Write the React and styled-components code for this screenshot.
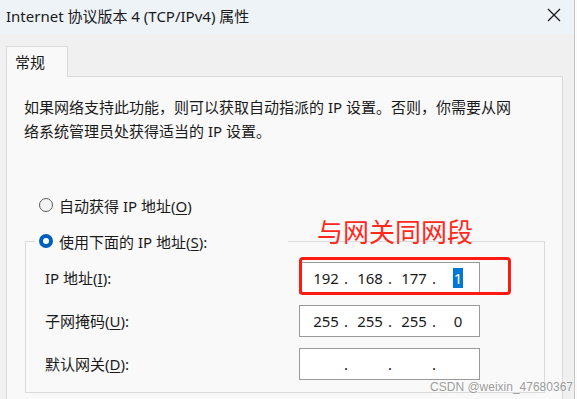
import styled, { createGlobalStyle } from "styled-components";

const GlobalStyle = createGlobalStyle`
    html, body {
        margin: 0;
        padding: 0;
        background: #fafafa;
    }
    body {
        font-family: "Noto Sans", "Noto Sans CJK SC", sans-serif;
        color: #1a1a1a;
    }
`;

const ipRows = [
    { label: "IP 地址", key: "I", parts: ["192", "168", "177", "1"], marked: true },
    { label: "子网掩码", key: "U", parts: ["255", "255", "255", "0"] },
    { label: "默认网关", key: "D", parts: ["", "", "", ""] },
];

const CloseIcon = () => (
    <svg width="14" height="14" viewBox="0 0 14 14">
        <path d="M1 1 L13 13 M13 1 L1 13" stroke="#1a1a1a" strokeWidth="1.3" fill="none" />
    </svg>
);

const IpField = ({ parts, marked }) => (
    <FieldBox>
        {parts.map((p, i) => (
            <Segment key={i}>
                <Number>{i === 3 && marked ? <Selected>{p}</Selected> : p}</Number>
                {i < 3 && <Dot>.</Dot>}
            </Segment>
        ))}
    </FieldBox>
);

const App = () => {
    return (
        <Screen>
            <GlobalStyle />
            <Window>
                <TitleBar>
                    <Title>Internet 协议版本 4 (TCP/IPv4) 属性</Title>
                    <CloseButton>
                        <CloseIcon />
                    </CloseButton>
                </TitleBar>

                <Body>
                    <TabStrip>
                        <Tab>常规</Tab>
                    </TabStrip>

                    <Panel>
                        <Description>
                            如果网络支持此功能，则可以获取自动指派的 IP 设置。否则，你需要从网
                            <br />
                            络系统管理员处获得适当的 IP 设置。
                        </Description>

                        <Option>
                            <Radio />
                            <span>自动获得 IP 地址(<u>O</u>)</span>
                        </Option>

                        <Group>
                            <Legend>
                                <Option as="div">
                                    <Radio checked />
                                    <span>使用下面的 IP 地址(<u>S</u>):</span>
                                </Option>
                            </Legend>
                            <Grid>
                                {ipRows.map(row => (
                                    <Row key={row.key}>
                                        <Label>
                                            {row.label}(<u>{row.key}</u>):
                                        </Label>
                                        <FieldWrap>
                                            <IpField parts={row.parts} marked={row.marked} />
                                            {row.marked && <Marker />}
                                        </FieldWrap>
                                    </Row>
                                ))}
                            </Grid>
                        </Group>
                    </Panel>
                </Body>

                <Note>与网关同网段</Note>
                <Watermark>CSDN @weixin_47680367</Watermark>
            </Window>
        </Screen>
    );
};

const Screen = styled.div`
    width: 577px;
    height: 399px;
    overflow: hidden;
    display: flex;
    background: #fafafa;
`;

const Window = styled.div`
    position: relative;
    width: 574px;
    height: 399px;
    flex-shrink: 0;
    background: #f0f0f0;
    border-right: 1px solid #c6c6c6;
    display: flex;
    flex-direction: column;
`;

const TitleBar = styled.div`
    height: 34px;
    flex-shrink: 0;
    display: flex;
    align-items: center;
    justify-content: space-between;
    padding: 0 13px 0 6px;
    background: #eef3f8;
`;

const Title = styled.div`
    font-size: 15px;
    line-height: 20px;
    color: #1a1a1a;
    padding-bottom: 3px;
`;

const CloseButton = styled.div`
    display: flex;
    align-items: center;
    padding-bottom: 4px;
`;

const Body = styled.div`
    padding: 12px 11px 0 6px;
    display: flex;
    flex-direction: column;
`;

const TabStrip = styled.div`
    display: flex;
    position: relative;
    z-index: 1;
    margin-bottom: -1px;
`;

const Tab = styled.div`
    width: 62px;
    height: 31px;
    box-sizing: border-box;
    padding: 2px 0 0 8px;
    border: 1px solid #dadada;
    border-bottom: none;
    background: #f9f9f9;
    font-size: 15px;
    line-height: 26px;
`;

const Panel = styled.div`
    border: 1px solid #dadada;
    background: #f9f9f9;
    padding: 18px 0 0 0;
    height: 340px;
`;

const Description = styled.p`
    margin: 0 0 0 17px;
    font-size: 15px;
    line-height: 24px;
`;

const Option = styled.label`
    display: flex;
    align-items: center;
    gap: 6px;
    height: 22px;
    margin: 51px 0 0 32px;
    font-size: 15px;

    u {
        text-underline-offset: 2px;
    }
`;

const Radio = styled.span`
    width: 14px;
    height: 14px;
    box-sizing: border-box;
    border-radius: 50%;
    flex-shrink: 0;
    border: ${p => (p.checked ? "4px solid #005fb8" : "1px solid #5c5c5c")};
    background: ${p => (p.checked ? "#ffffff" : "#f4f4f4")};
`;

const Group = styled.fieldset`
    margin: 14px 17px 0 18px;
    padding: 10px 19px 12px 19px;
    border: 1px solid #dadada;
    min-width: 0;
`;

const Legend = styled.legend`
    padding: 0 0 0 4px;
    margin-left: -10px;
    width: 253px;
    box-sizing: border-box;

    ${Option} {
        margin: 0;
    }
`;

const Grid = styled.div`
    display: flex;
    flex-direction: column;
    gap: 11px;
`;

const Row = styled.div`
    display: grid;
    grid-template-columns: 254px 181px;
    align-items: center;
`;

const Label = styled.div`
    font-size: 15px;
    line-height: 20px;

    u {
        text-underline-offset: 2px;
    }
`;

const FieldWrap = styled.div`
    position: relative;
`;

const FieldBox = styled.div`
    height: 32px;
    box-sizing: border-box;
    border: 1px solid #9a9a9a;
    background: #ffffff;
    display: flex;
    align-items: center;
    padding-left: 10px;
    font-size: 15px;
`;

const Segment = styled.div`
    display: flex;
    align-items: center;
    width: 44px;
    flex-shrink: 0;
`;

const Number = styled.span`
    width: 32px;
    text-align: center;
`;

const Dot = styled.span`
    width: 8px;
    text-align: center;
`;

const Selected = styled.span`
    background: #0078d7;
    color: #ffffff;
    padding: 0 1px;
    line-height: 20px;
`;

const Marker = styled.div`
    position: absolute;
    left: 0;
    top: -5px;
    width: 212px;
    height: 38px;
    box-sizing: border-box;
    border: 3px solid #ff1a14;
    border-radius: 4px;
    pointer-events: none;
`;

const Note = styled.div`
    position: absolute;
    left: 317px;
    top: 216px;
    font-size: 26px;
    line-height: 30px;
    color: #ff2a1e;
    font-family: "Noto Sans CJK SC", sans-serif;
`;

const Watermark = styled.div`
    position: absolute;
    right: 1px;
    bottom: 5px;
    font-size: 12px;
    line-height: 14px;
    color: rgba(120, 120, 120, 0.75);
    text-shadow: 0 0 2px #ffffff;
    font-family: "Liberation Sans", sans-serif;
`;

export default App;
